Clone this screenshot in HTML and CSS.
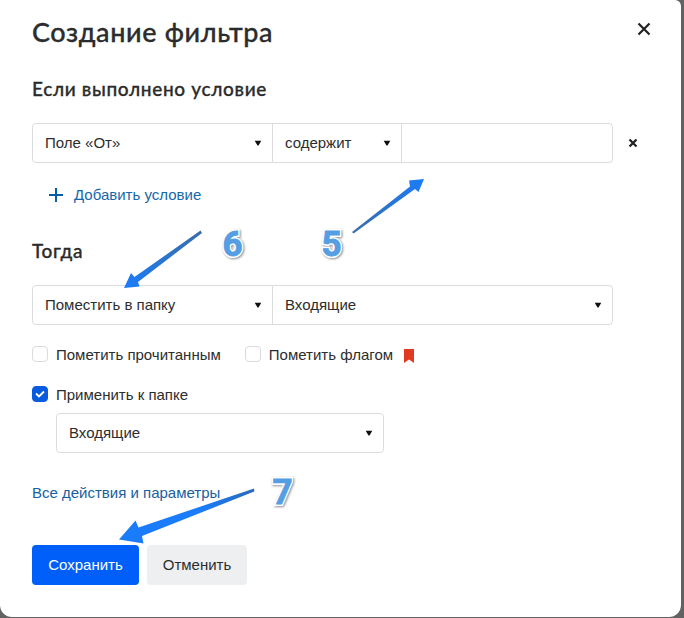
FILE: index.html
```html
<!DOCTYPE html>
<html lang="ru">
<head>
<meta charset="utf-8">
<title>Создание фильтра</title>
<link rel="stylesheet" href="styles.css">
</head>
<body>
<main class="dialog">
  <header class="header">
    <h1 class="title">Создание фильтра</h1>
    <svg class="close" width="14" height="14" viewBox="0 0 14 14"><path d="M1.500 1.500l11 11M12.500 1.500l-11 11"/></svg>
  </header>
  <h2 class="subtitle subtitle-if">Если выполнено условие</h2>
  <div class="condition">
    <div class="group">
      <div class="select field"><span>Поле «От»</span><svg class="caret" width="8" height="6" viewBox="0 0 8 6"><path d="M.7.7h6.600L4.500 5.500h-1z"/></svg></div>
      <div class="select operator"><span>содержит</span><svg class="caret" width="8" height="6" viewBox="0 0 8 6"><path d="M.7.7h6.600L4.500 5.500h-1z"/></svg></div>
      <div class="select value"></div>
    </div>
    <svg class="remove" width="10" height="10" viewBox="0 0 10 10"><path d="M1.500 1.500l7 7M8.500 1.500l-7 7"/></svg>
  </div>
  <div class="add">
    <svg class="plus" width="14" height="14" viewBox="0 0 14 14"><path d="M7 0v14M0 7h14"/></svg>
    <span>Добавить условие</span>
  </div>
  <h2 class="subtitle subtitle-then">Тогда</h2>
  <div class="group">
    <div class="select field"><span>Поместить в папку</span><svg class="caret" width="8" height="6" viewBox="0 0 8 6"><path d="M.7.7h6.600L4.500 5.500h-1z"/></svg></div>
    <div class="select folder"><span>Входящие</span><svg class="caret" width="8" height="6" viewBox="0 0 8 6"><path d="M.7.7h6.600L4.500 5.500h-1z"/></svg></div>
  </div>
  <div class="checks">
    <div class="check read"><span class="box"></span><span>Пометить прочитанным</span></div>
    <div class="check"><span class="box"></span><span>Пометить флагом</span>
      <svg class="flag" width="10" height="14" viewBox="0 0 10 14"><path d="M0 0h10v14L5 10.500 0 14z"/></svg></div>
  </div>
  <div class="check apply">
    <span class="box checked"><svg width="10" height="8" viewBox="0 0 10 8"><path d="M1 3.500l3 3L9 1.500"/></svg></span>
    <span>Применить к папке</span>
  </div>
  <div class="group target">
    <div class="select"><span>Входящие</span><svg class="caret" width="8" height="6" viewBox="0 0 8 6"><path d="M.7.7h6.600L4.500 5.500h-1z"/></svg></div>
  </div>
  <div class="all">Все действия и параметры</div>
  <footer class="actions">
    <div class="button save">Сохранить</div>
    <div class="button cancel">Отменить</div>
  </footer>
  <svg class="notes" width="684" height="618" viewBox="0 0 684 618">
    <defs>
      <linearGradient id="a5" gradientUnits="userSpaceOnUse" x1="353" y1="233" x2="424" y2="179"><stop offset="0" stop-color="#3a6da8"/><stop offset="1" stop-color="#1a7cfa"/></linearGradient>
      <linearGradient id="a6" gradientUnits="userSpaceOnUse" x1="202" y1="232" x2="124" y2="288"><stop offset="0" stop-color="#3a6da8"/><stop offset="1" stop-color="#1a7cfa"/></linearGradient>
      <linearGradient id="a7" gradientUnits="userSpaceOnUse" x1="254" y1="490" x2="119" y2="540"><stop offset="0" stop-color="#2c6bbb"/><stop offset=".4" stop-color="#1a7cfa"/></linearGradient>
    </defs>
    <path fill="url(#a5)" d="M352 232L410 186.500l-1-6L424 179l-5.500 13-3.500-3-61.500 44.500z"/>
    <path fill="url(#a6)" d="M200.500 230.500L134.500 277l-3.500-4L124 288l15.500-1.500-1.500-4.500L202 233z"/>
    <path fill="url(#a7)" d="M254 488.500l.3 3L142 536l1.500 7.500L119 539.500l16.500-19 3 7z"/>
    <g class="digits">
      <text x="321.500" y="256">5</text>
      <text x="222.500" y="256">6</text>
      <text class="seven" x="272.500" y="503.500">7</text>
    </g>
    <g class="digits-fill">
      <text x="321.500" y="256">5</text>
      <text x="222.500" y="256">6</text>
      <text class="seven" x="272.500" y="503.500">7</text>
    </g>
  </svg>
</main>
</body>
</html>
```
FILE: styles.css
```css
* { box-sizing: border-box; }
body {
  margin: 0;
  height: 618px;
  overflow: hidden;
  background: #626262;
  font: 15px/20px "Liberation Sans", Arial, sans-serif;
  color: #2c2d2e;
}
.dialog {
  position: relative;
  width: 681px;
  height: 617px;
  padding: 16px 29px 0 32px;
  background: #fff;
  border-radius: 0 6px 12px 12px;
}
.header { display: flex; justify-content: space-between; height: 32px; }
.title {
  margin: 0;
  font: 500 27px/32px Lato, sans-serif;
  letter-spacing: .62px;
  white-space: nowrap;
  -webkit-text-stroke: .3px #222;
}
.close { margin-top: 6px; margin-right: 1px; fill: none; stroke: #222; stroke-width: 2.2; }
.subtitle {
  margin: 0;
  font: 500 19px/24px Lato, sans-serif;
  letter-spacing: .66px;
  -webkit-text-stroke: .3px #222;
}
.subtitle-if { margin-top: 29px; }
.subtitle-then { margin-top: 34px; margin-bottom: 22px; }
.condition { display: flex; align-items: center; gap: 15px; margin-top: 22px; }
.group { display: flex; width: 581px; height: 40px; border: 1px solid #dadcde; border-radius: 4px; }
.select { display: flex; align-items: center; justify-content: space-between; flex: 1; padding: 0 10px 0 12px; }
.select + .select { border-left: 1px solid #dadcde; }
.field { flex: 0 0 239px; }
.operator { flex: 0 0 129px; }
.caret { fill: #111; }
.remove { fill: none; stroke: #222; stroke-width: 2.3; }
.add { display: flex; align-items: center; gap: 11px; margin: 22px 0 0 17px; color: #1567ac; }
.plus { fill: none; stroke: #075ea8; stroke-width: 2; }
.checks { display: flex; gap: 24px; margin-top: 20px; }
.check { display: flex; align-items: center; gap: 8px; }
.box { width: 16px; height: 16px; margin-top: -2px; border: 1px solid #d9dbdd; border-radius: 4px; }
.checked { display: flex; align-items: center; justify-content: center; background: #075bdc; border-color: #075bdc; }
.checked svg { fill: none; stroke: #fff; stroke-width: 1.8; }
.flag { margin-top: 1px; margin-left: 3px; fill: #e03a22; }
.apply { margin-top: 20px; }
.target { width: 328px; margin: 8px 0 0 24px; }
.target .select { padding-right: 10px; }
.all { margin-top: 30px; color: #17609e; }
.actions { display: flex; gap: 8px; margin-top: 42px; }
.button { height: 40px; line-height: 40px; border-radius: 4px; text-align: center; }
.save { width: 107px; background: #005ff9; color: #fff; }
.cancel { width: 100px; background: #eeeff1; }
.notes { position: absolute; left: 0; top: 0; }
.digits, .digits-fill { font: 700 35px Roboto, sans-serif; fill: #559ee3; }
.digits {
  stroke: #fff;
  stroke-width: 4px;
  filter: drop-shadow(1px 1px 1px #8e8e98);
}
.digits-fill { stroke: #559ee3; stroke-width: .9px; }
```
